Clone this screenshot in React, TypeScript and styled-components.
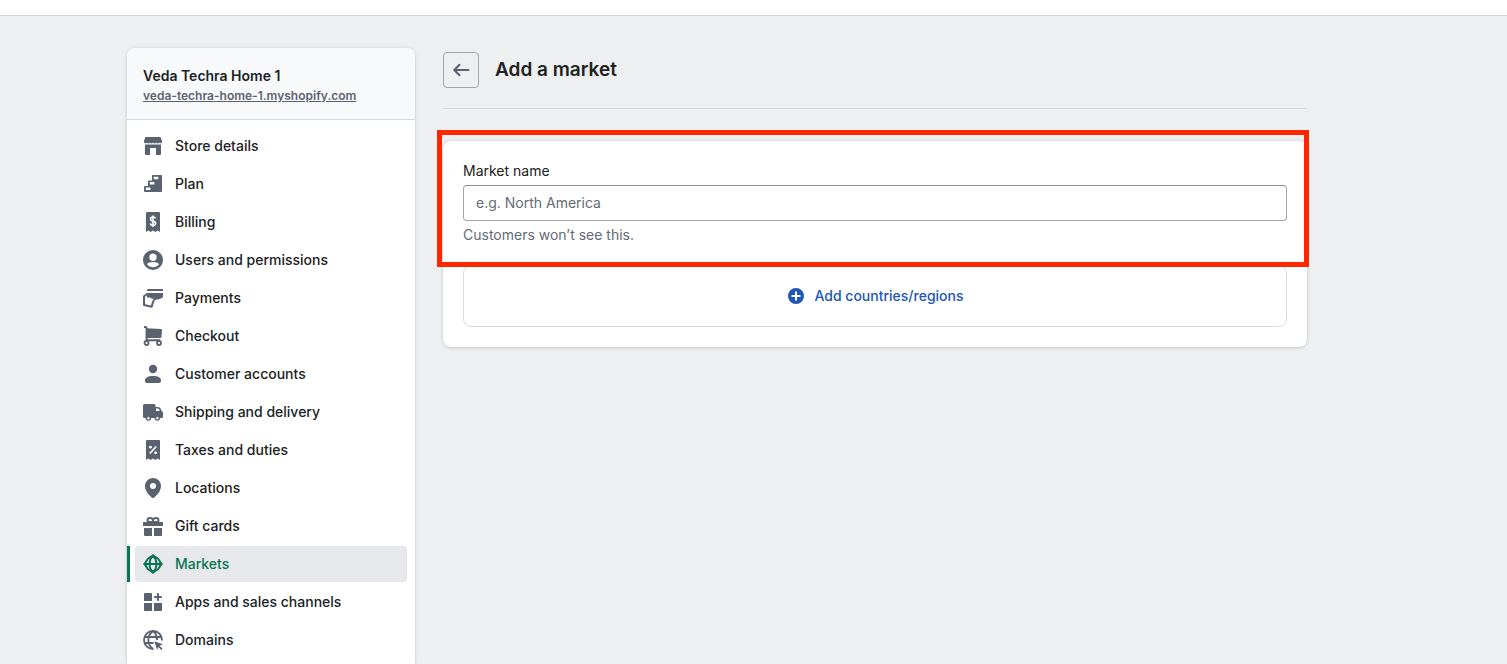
import React from "react";
import styled, { createGlobalStyle } from "styled-components";

const GlobalStyle = createGlobalStyle`
  *, *::before, *::after { box-sizing: border-box; }
  body {
    margin: 0;
    background: #eeeff1;
    color: #202223;
    font-family: Inter, "Liberation Sans", sans-serif;
    font-size: 14px;
    line-height: 20px;
    -webkit-font-smoothing: antialiased;
  }
`;

const Page = styled.div`
  min-height: 100vh;
  display: flex;
  flex-direction: column;
`;

const TopBar = styled.header`
  height: 16px;
  flex: none;
  background: #fff;
  border-bottom: 1px solid #d5d7da;
`;

const Layout = styled.div`
  flex: 1;
  display: flex;
  gap: 28px;
  padding: 32px 200px 0 127px;
`;

const Sidebar = styled.aside`
  flex: none;
  width: 288px;
  background: #fff;
  border-radius: 8px 8px 0 0;
  box-shadow: 0 0 5px rgba(23, 24, 24, 0.08), 0 1px 3px rgba(0, 0, 0, 0.12);
`;

const StoreHeader = styled.div`
  display: flex;
  flex-direction: column;
  align-items: flex-start;
  padding: 18px 16px 13px;
  background: #f8f9fb;
  border-bottom: 1px solid #d5d7da;
  border-radius: 8px 8px 0 0;
`;

const StoreName = styled.strong`
  font-weight: 600;
`;

const StoreLink = styled.a`
  color: #5c6370;
  font-size: 12px;
  font-weight: 600;
`;

const NavList = styled.ul`
  list-style: none;
  margin: 0;
  padding: 8px 0 0;
  display: flex;
  flex-direction: column;
  gap: 2px;
`;

const NavRow = styled.li<{ $active?: boolean }>`
  display: flex;
  padding-right: 8px;
  border-left: 3px solid ${(p) => (p.$active ? "#0a7553" : "transparent")};
`;

const NavLink = styled.a<{ $active?: boolean }>`
  flex: 1;
  display: flex;
  align-items: center;
  gap: 12px;
  height: 36px;
  margin-left: 5px;
  padding: 0 8px;
  border-radius: 4px;
  font-weight: 500;
  text-decoration: none;
  color: ${(p) => (p.$active ? "#0a7553" : "#202223")};
  background: ${(p) => (p.$active ? "#e7e8eb" : "transparent")};
  svg { color: ${(p) => (p.$active ? "#0a7553" : "#5a6270")}; }
`;

const Icon = styled.svg.attrs({ viewBox: "0 0 20 20", "aria-hidden": true })`
  flex: none;
  width: 20px;
  height: 20px;
  fill: currentColor;
`;

const Main = styled.main`
  flex: 1;
  min-width: 0;
  padding-top: 4px;
`;

const TitleBar = styled.div`
  display: flex;
  align-items: center;
  gap: 16px;
  padding-bottom: 20px;
  margin-bottom: 32px;
  border-bottom: 1px solid #d5d7dc;
`;

const BackButton = styled.button`
  display: grid;
  place-items: center;
  width: 36px;
  height: 36px;
  padding: 0;
  color: #5a6270;
  background: transparent;
  border: 1px solid #9fa5b1;
  border-radius: 4px;
`;

const Title = styled.h1`
  margin: 0;
  font-size: 19px;
  line-height: 28px;
  font-weight: 600;
`;

const Card = styled.section`
  position: relative;
  display: flex;
  flex-direction: column;
  gap: 20px;
  padding: 20px;
  background: #fff;
  border-radius: 8px;
  box-shadow: 0 0 5px rgba(23, 24, 24, 0.08), 0 1px 3px rgba(0, 0, 0, 0.12);
`;

const Highlight = styled.div`
  position: absolute;
  top: -11px;
  left: -6px;
  right: -2px;
  height: 137px;
  border: 5px solid #ff2600;
  pointer-events: none;
`;

const Field = styled.div`
  display: flex;
  flex-direction: column;
  gap: 4px;
`;

const TextInput = styled.input`
  width: 100%;
  height: 36px;
  padding: 0 12px 1px;
  font: inherit;
  color: inherit;
  background: #fff;
  border: 1px solid #a0a5b0;
  border-top-color: #888c94;
  border-radius: 4px;
  &::placeholder { color: #646b76; opacity: 1; }
`;

const HelpText = styled.span`
  color: #646b76;
`;

const AddButton = styled.button`
  display: flex;
  align-items: center;
  justify-content: center;
  gap: 8px;
  padding: 20px;
  font: inherit;
  font-weight: 500;
  color: #2056b5;
  background: #fff;
  border: 1px solid #d9dbe0;
  border-radius: 8px;
`;

const receipt = "M3 1a1 1 0 0 1 1-1h12a1 1 0 0 1 1 1v19l-2.300-1.500L12.300 20 10 18.500 7.700 20l-2.400-1.500L3 20z";

const icons = {
  store: (
    <>
      <path d="M2.500 1h15l1.500 4v1.200a1.500 1.500 0 0 1-2.800.3 1.800 1.800 0 0 1-3.100 0 1.800 1.800 0 0 1-3.100 0 1.800 1.800 0 0 1-3.100 0 1.800 1.800 0 0 1-3.100 0A1.500 1.500 0 0 1 1 6.200V5z" />
      <path d="M2 8.500h16V18a1 1 0 0 1-1 1h-4v-7H7v7H3a1 1 0 0 1-1-1z" />
    </>
  ),
  plan: (
    <path
      fillRule="evenodd"
      d="M10 1h8a1 1 0 0 1 1 1v15a1 1 0 0 1-1 1H2a1 1 0 0 1-1-1v-4a1 1 0 0 1 1-1h3V7.500a1 1 0 0 1 1-1h3V2a1 1 0 0 1 1-1zM10.700 2.700v2.500h4.600V2.700zM6.800 8v2.500h4.600V8zM2.800 13.500V16h4.600v-2.500z"
    />
  ),
  billing: (
    <>
      <path d={receipt} />
      <path d="M12.500 6.500C12.200 5.500 11.300 5 10 5c-1.400 0-2.500.700-2.500 2s1.200 1.800 2.500 2.100 2.600.8 2.600 2.200c0 1.200-1.100 2-2.600 2-1.400 0-2.400-.7-2.600-1.900M10 3.500v11.400" fill="none" stroke="#fff" strokeWidth="1.600" />
    </>
  ),
  users: (
    <path
      fillRule="evenodd"
      d="M10 0a10 10 0 1 1 0 20 10 10 0 0 1 0-20zm0 3.500a3.700 3.700 0 1 0 0 7.400 3.700 3.700 0 0 0 0-7.400zM4 14.300a7.400 7.400 0 0 0 12 0c-.6-1.500-3-2.300-6-2.300s-5.400.800-6 2.300z"
    />
  ),
  payments: (
    <>
      <path d="M5.500 1H20v2H4a1.500 1.500 0 0 1 1.500-2z" />
      <path d="M4 5h16v3.500a1.500 1.500 0 0 1-1.200 1.400L14 10.800H9L7 9.500H4z" />
      <path d="M4.500 5.800 1 8.300v8.800l7.700 1.700 1.200-4.500c.5-1.900 1.300-3 2.900-3.400l4.700-1.100" fill="none" stroke="currentColor" strokeWidth="2" strokeLinejoin="round" />
    </>
  ),
  checkout: (
    <>
      <path d="M3.500 2.200 18 3a1 1 0 0 1 1 1.100l-.5 6.700a1.200 1.200 0 0 1-1.200 1.200H3.500z" />
      <path d="M1 1h1.200A1.400 1.400 0 0 1 3.600 2.400V14.200H17" fill="none" stroke="currentColor" strokeWidth="2" />
      <circle cx="3.500" cy="17" r="2" fill="none" stroke="currentColor" strokeWidth="1.800" />
      <circle cx="16" cy="17" r="2" fill="none" stroke="currentColor" strokeWidth="1.800" />
    </>
  ),
  customer: (
    <>
      <circle cx="10" cy="5" r="4.200" />
      <path d="M2 16.200C2 13.500 5.500 12 10 12s8 1.500 8 4.200V17a2 2 0 0 1-2 2H4a2 2 0 0 1-2-2z" />
    </>
  ),
  shipping: (
    <path
      fillRule="evenodd"
      d="M1.500 2H11a1.500 1.500 0 0 1 1.500 1.500V5H15c1.400 0 2.300.8 2.800 2l.8 2c.9.400 1.400 1.100 1.400 2v3.500a1.500 1.500 0 0 1-1.500 1.500h-1.300a2.800 2.800 0 0 1-5.600 0H8.200a2.800 2.800 0 0 1-5.600 0H1.500A1.500 1.500 0 0 1 0 14.500v-11A1.500 1.500 0 0 1 1.500 2zM13 6.500V9h3.700L16 7.300a1.300 1.300 0 0 0-1.200-.8zM5.400 15a1.200 1.200 0 1 0 0 2.400 1.200 1.200 0 0 0 0-2.400zm9 0a1.200 1.200 0 1 0 0 2.400 1.200 1.200 0 0 0 0-2.400z"
    />
  ),
  taxes: (
    <>
      <path d={receipt} />
      <path d="m6.800 13.500 6.400-7" stroke="#fff" strokeWidth="1.700" />
      <circle cx="7.400" cy="7.200" r="1.400" fill="#fff" />
      <circle cx="12.600" cy="12.800" r="1.400" fill="#fff" />
    </>
  ),
  location: (
    <path
      fillRule="evenodd"
      d="M10 0a8 8 0 0 1 8 8c0 6.500-6.800 11.400-7.100 11.700a1.500 1.500 0 0 1-1.800 0C8.800 19.400 2 14.500 2 8a8 8 0 0 1 8-8zm0 5a3 3 0 1 0 0 6 3 3 0 0 0 0-6z"
    />
  ),
  gift: (
    <>
      <path d="M1 6h18a1 1 0 0 1 1 1v3H0V7a1 1 0 0 1 1-1zM1 12h8v8H2a1 1 0 0 1-1-1zM11 12h8v7a1 1 0 0 1-1 1h-7z" />
      <path d="M10 6V4.500A2.500 2.500 0 0 0 7.300 2 2.200 2.200 0 0 0 4.500 4.200c0 1 .6 1.800 1.800 1.800zm0 0V4.500A2.500 2.500 0 0 1 12.700 2a2.200 2.200 0 0 1 2.800 2.200c0 1-.6 1.800-1.800 1.800z" fill="none" stroke="currentColor" strokeWidth="2" />
    </>
  ),
  markets: (
    <>
      <path d="m10 0 3.300 2.800H6.700zM20 10l-2.800 3.300V6.700zM10 20l-3.300-2.800h6.600zM0 10l2.800-3.300v6.600z" />
      <g fill="none" stroke="currentColor" strokeWidth="2">
        <circle cx="10" cy="10" r="7.300" />
        <ellipse cx="10" cy="10" rx="3.400" ry="7.300" />
        <path d="M2 10h16" />
      </g>
    </>
  ),
  apps: (
    <>
      <path d="M2 1h6a1 1 0 0 1 1 1v7H1V2a1 1 0 0 1 1-1zM1 11h8v8H2a1 1 0 0 1-1-1zM11 11h8v7a1 1 0 0 1-1 1h-7z" />
      <path d="M15 1.200v7.600M11.200 5h7.600" stroke="currentColor" strokeWidth="2" />
    </>
  ),
  domains: (
    <>
      <g fill="none" stroke="currentColor" strokeWidth="1.900">
        <path d="M10.500 19A9 9 0 1 1 19 10.500M1.500 7h17M1.500 13H10.500M10 1C3.800 5.500 3.800 14.500 10 19M10 1c2.600 2 4 5 4.100 9" />
      </g>
      <path d="m11.300 11.300 8.500 3-3.300 1.500 3 3-1.200 1.200-3-3-1.200 3z" />
    </>
  ),
};

type IconName = keyof typeof icons;

const items: { label: string; icon: IconName; active?: boolean }[] = [
  { label: "Store details", icon: "store" },
  { label: "Plan", icon: "plan" },
  { label: "Billing", icon: "billing" },
  { label: "Users and permissions", icon: "users" },
  { label: "Payments", icon: "payments" },
  { label: "Checkout", icon: "checkout" },
  { label: "Customer accounts", icon: "customer" },
  { label: "Shipping and delivery", icon: "shipping" },
  { label: "Taxes and duties", icon: "taxes" },
  { label: "Locations", icon: "location" },
  { label: "Gift cards", icon: "gift" },
  { label: "Markets", icon: "markets", active: true },
  { label: "Apps and sales channels", icon: "apps" },
  { label: "Domains", icon: "domains" },
];

export default function App() {
  return (
    <Page>
      <GlobalStyle />
      <TopBar />
      <Layout>
        <Sidebar>
          <StoreHeader>
            <StoreName>Veda Techra Home 1</StoreName>
            <StoreLink href="#store">veda-techra-home-1.myshopify.com</StoreLink>
          </StoreHeader>
          <nav aria-label="Settings">
            <NavList>
              {items.map((item) => (
                <NavRow key={item.label} $active={item.active}>
                  <NavLink
                    href={`#${item.icon}`}
                    $active={item.active}
                    aria-current={item.active ? "page" : undefined}
                  >
                    <Icon>{icons[item.icon]}</Icon>
                    {item.label}
                  </NavLink>
                </NavRow>
              ))}
            </NavList>
          </nav>
        </Sidebar>
        <Main>
          <TitleBar>
            <BackButton type="button" aria-label="Back">
              <Icon>
                <path d="M17.500 10H3.500M8.500 4.700 3.200 10l5.300 5.300" fill="none" stroke="currentColor" strokeWidth="2" strokeLinecap="round" strokeLinejoin="round" />
              </Icon>
            </BackButton>
            <Title>Add a market</Title>
          </TitleBar>
          <Card>
            <Field>
              <label htmlFor="market-name">Market name</label>
              <TextInput
                id="market-name"
                type="text"
                placeholder="e.g. North America"
                aria-describedby="market-name-help"
              />
              <HelpText id="market-name-help">Customers won’t see this.</HelpText>
            </Field>
            <AddButton type="button">
              <Icon>
                <path
                  fillRule="evenodd"
                  d="M10 2a8 8 0 1 1 0 16 8 8 0 0 1 0-16zM9 5.500V9H5.500v2H9v3.500h2V11h3.500V9H11V5.500z"
                />
              </Icon>
              Add countries/regions
            </AddButton>
            <Highlight />
          </Card>
        </Main>
      </Layout>
    </Page>
  );
}
